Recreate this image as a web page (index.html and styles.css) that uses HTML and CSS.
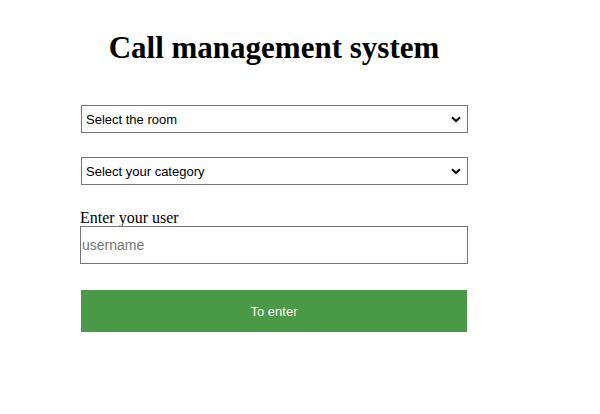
FILE: index.html
```html
<!DOCTYPE html>
<html lang="en">
<head>
<meta charset="utf-8">
<title>Call management system</title>
<link rel="stylesheet" href="styles.css">
</head>
<body>
<main class="login">
  <h1 class="login-title">Call management system</h1>
  <form class="login-form">
    <div class="select-wrap room-wrap">
      <select class="field-select">
        <option>Select the room</option>
      </select>
      <svg class="chevron" width="10" height="7" viewBox="0 0 10 7" aria-hidden="true"><path d="M1 1.2 L5 5 L9 1.2" fill="none" stroke="#111" stroke-width="2.2"/></svg>
    </div>
    <div class="select-wrap category-wrap">
      <select class="field-select">
        <option>Select your category</option>
      </select>
      <svg class="chevron" width="10" height="7" viewBox="0 0 10 7" aria-hidden="true"><path d="M1 1.2 L5 5 L9 1.2" fill="none" stroke="#111" stroke-width="2.2"/></svg>
    </div>
    <label class="field-label" for="user">Enter your user</label>
    <input class="field-input" id="user" type="text" placeholder="username">
    <button class="submit-btn" type="button">To enter</button>
  </form>
</main>
</body>
</html>
```
FILE: styles.css
```css
html, body {
  margin: 0;
  padding: 0;
  background: #ffffff;
}

body {
  font-family: "Liberation Serif", "Times New Roman", serif;
  color: #000;
}

.login {
  width: 388px;
  padding: 31px 0 0 80px;
}

.login-title {
  margin: 0;
  text-align: center;
  font-size: 31px;
  font-weight: bold;
  line-height: 34px;
}

.login-form {
  display: flex;
  flex-direction: column;
  align-items: flex-start;
  padding-top: 40px;
}

.select-wrap {
  position: relative;
  width: 387px;
  height: 28px;
  margin-left: 1px;
  margin-bottom: 24px;
}

.field-select {
  -webkit-appearance: none;
  appearance: none;
  box-sizing: border-box;
  width: 100%;
  height: 100%;
  margin: 0;
  border: 1px solid #767676;
  border-radius: 0;
  background: #fff;
  font-family: "Liberation Sans", Arial, sans-serif;
  font-size: 13px;
  color: #000;
  padding: 0 24px 0 4px;
  outline: none;
}

.chevron {
  position: absolute;
  right: 7px;
  top: 11px;
  pointer-events: none;
}

.field-label {
  font-size: 16px;
  line-height: 17px;
}

.field-input {
  box-sizing: border-box;
  width: 388px;
  height: 38px;
  margin: 0;
  border: 1px solid #767676;
  border-radius: 0;
  padding: 0 1px;
  font-family: "Liberation Sans", Arial, sans-serif;
  font-size: 14px;
  color: #000;
}

.field-input::placeholder {
  color: #757575;
}

.submit-btn {
  box-sizing: border-box;
  width: 386px;
  height: 42px;
  margin: 26px 0 0 1px;
  border: none;
  border-radius: 0;
  background: #4a9946;
  color: #fff;
  font-family: "Liberation Sans", Arial, sans-serif;
  font-size: 13px;
  cursor: pointer;
}
```
